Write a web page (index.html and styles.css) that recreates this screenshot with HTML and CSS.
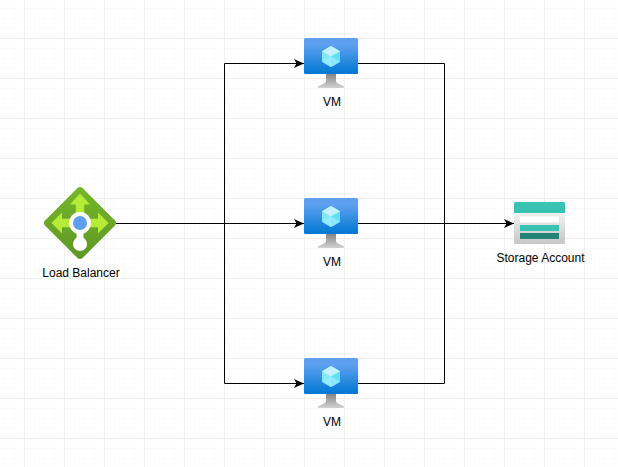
FILE: index.html
```html
<!DOCTYPE html>
<html lang="en">
<head>
<meta charset="utf-8">
<title>Azure diagram</title>
<link rel="stylesheet" href="styles.css">
</head>
<body>
<main class="canvas">
  <svg class="wires" width="618" height="467" viewBox="0 0 618 467" aria-hidden="true">
    <defs>
      <marker id="head" markerUnits="userSpaceOnUse" markerWidth="11" markerHeight="11" refX="10" refY="5.500" orient="auto">
        <path d="M0 1 10 5.500 0 10 2.500 5.500Z" fill="#000"/>
      </marker>
    </defs>
    <g class="wire">
      <path d="M116 223.500H304" marker-end="url(#head)"/>
      <path d="M224.500 223.500V63.500H304" marker-end="url(#head)"/>
      <path d="M224.500 223.500V383.500H304" marker-end="url(#head)"/>
      <path d="M358 63.500H444.500V223.500"/>
      <path d="M358 383.500H444.500V223.500"/>
      <path d="M358 223.500H514" marker-end="url(#head)"/>
    </g>
  </svg>

  <svg class="defs" width="0" height="0" aria-hidden="true">
    <defs>
      <linearGradient id="vmScreen" x1="0" y1="0" x2="0" y2="1">
        <stop offset="0" stop-color="#5ea0ef"/><stop offset=".18" stop-color="#5ea0ef"/><stop offset="1" stop-color="#0078d4"/>
      </linearGradient>
      <linearGradient id="vmStand" x1="0" y1="0" x2="0" y2="1">
        <stop offset="0" stop-color="#858585"/><stop offset="1" stop-color="#d2d2d2"/>
      </linearGradient>
      <symbol id="vm" viewBox="0 0 54 50">
        <path d="M22 36H32V43C32 45.500 36 46.500 39 47.800 40.500 48.600 40.500 50 39 50H15C13.500 50 13.500 48.600 15 47.800 18 46.500 22 45.500 22 43Z" fill="url(#vmStand)"/>
        <rect width="54" height="36" rx="1.500" fill="url(#vmScreen)"/>
        <path d="M27 8 36 13.200V23.800L27 29 18 23.800V13.200Z" fill="#83e9ff"/>
        <path d="M27 8 36 13.200 27 18.500 18 13.200Z" fill="#c3f1ff"/>
        <path d="M27 18.500 36 13.200V23.800L27 29Z" fill="#5ee0fb"/>
        <path d="M18 23.800 27 18.500 36 23.800 27 29Z" fill="#9cebff" opacity=".75"/>
      </symbol>
    </defs>
  </svg>

  <figure class="node lb">
    <svg class="lb-icon" width="72" height="72" viewBox="0 0 72 72" aria-hidden="true">
      <defs>
        <linearGradient id="lbBg" x1="0" y1="0" x2="0" y2="1">
          <stop offset="0" stop-color="#76b82a"/><stop offset="1" stop-color="#5e9624"/>
        </linearGradient>
      </defs>
      <path d="M33.500 1 1 33.500Q-1 36 1 38.500L33.500 71Q36 73 38.500 71L71 38.500Q73 36 71 33.500L38.500 1Q36-1 33.500 1Z" fill="url(#lbBg)"/>
      <path d="M36 6.500 46 17.500H40.200V28H31.800V17.500H26Z" fill="#b4ec36"/>
      <path d="M7.500 36 18 25.500V31.800H28V40.200H18V46.500Z" fill="#b4ec36"/>
      <path d="M64.500 36 54 25.500V31.800H44V40.200H54V46.500Z" fill="#b4ec36"/>
      <path d="M32.500 45H39.500V54H32.500Z" fill="#fff"/>
      <circle cx="36" cy="36" r="11" fill="#fff"/>
      <circle cx="36" cy="36" r="7" fill="#5ea0ef"/>
      <circle cx="36" cy="57" r="7" fill="#fff"/>
    </svg>
    <figcaption class="label">Load Balancer</figcaption>
  </figure>

  <figure class="node vm vm-top">
    <svg class="vm-icon" width="54" height="50" aria-hidden="true"><use href="#vm"/></svg>
    <figcaption class="label">VM</figcaption>
  </figure>
  <figure class="node vm vm-mid">
    <svg class="vm-icon" width="54" height="50" aria-hidden="true"><use href="#vm"/></svg>
    <figcaption class="label">VM</figcaption>
  </figure>
  <figure class="node vm vm-bot">
    <svg class="vm-icon" width="54" height="50" aria-hidden="true"><use href="#vm"/></svg>
    <figcaption class="label">VM</figcaption>
  </figure>

  <figure class="node storage">
    <svg class="st-icon" width="51" height="42" viewBox="0 0 51 42" aria-hidden="true">
      <defs>
        <linearGradient id="stBody" x1="0" y1="0" x2="0" y2="1">
          <stop offset="0" stop-color="#f0f0f0"/><stop offset="1" stop-color="#c6c6c6"/>
        </linearGradient>
      </defs>
      <path d="M0 11H51V40.500Q51 42 49.500 42H1.500Q0 42 0 40.500Z" fill="url(#stBody)"/>
      <path d="M1.500 0H49.500Q51 0 51 1.500V11H0V1.500Q0 0 1.500 0Z" fill="#37c2b1"/>
      <rect x="6" y="14.500" width="39" height="6" fill="#fff"/>
      <rect x="6" y="23" width="39" height="6" fill="#37c2b1"/>
      <rect x="6" y="31" width="39" height="6" fill="#258277"/>
    </svg>
    <figcaption class="label">Storage Account</figcaption>
  </figure>
</main>
</body>
</html>
```
FILE: styles.css
```css
html, body {
  margin: 0;
  padding: 0;
  background: #fff;
}

.canvas {
  position: relative;
  width: 618px;
  height: 467px;
  overflow: hidden;
  background-color: #fff;
  background-image:
    linear-gradient(to right, #f0f0f0 1px, transparent 1px),
    linear-gradient(to bottom, #f0f0f0 1px, transparent 1px),
    linear-gradient(to right, #fbfbfb 1px, transparent 1px),
    linear-gradient(to bottom, #fbfbfb 1px, transparent 1px);
  background-size: 40px 40px, 40px 40px, 10px 10px, 10px 10px;
  background-position: 24px 0, 0 38px, 4px 0, 0 8px;
}

.wires {
  position: absolute;
  inset: 0;
}

.wire path {
  fill: none;
  stroke: #000;
  stroke-width: 1;
}

.defs {
  position: absolute;
}

.node {
  position: absolute;
  margin: 0;
  display: flex;
  flex-direction: column;
  align-items: center;
}

.node svg {
  display: block;
  flex: none;
}

.label {
  margin: 0 0 0 2px;
  font-family: "Liberation Sans", Arial, sans-serif;
  font-size: 12px;
  line-height: 14px;
  color: #000;
  white-space: nowrap;
}

.lb { left: 20px; top: 187px; width: 120px; }
.lb .label { margin-top: 7px; }

.vm { left: 304px; width: 54px; }
.vm .label { margin-top: 7px; }
.vm-top { top: 38px; }
.vm-mid { top: 198px; }
.vm-bot { top: 358px; }

.storage { left: 479px; top: 202px; width: 121px; }
.storage .label { margin-top: 7px; }
```
